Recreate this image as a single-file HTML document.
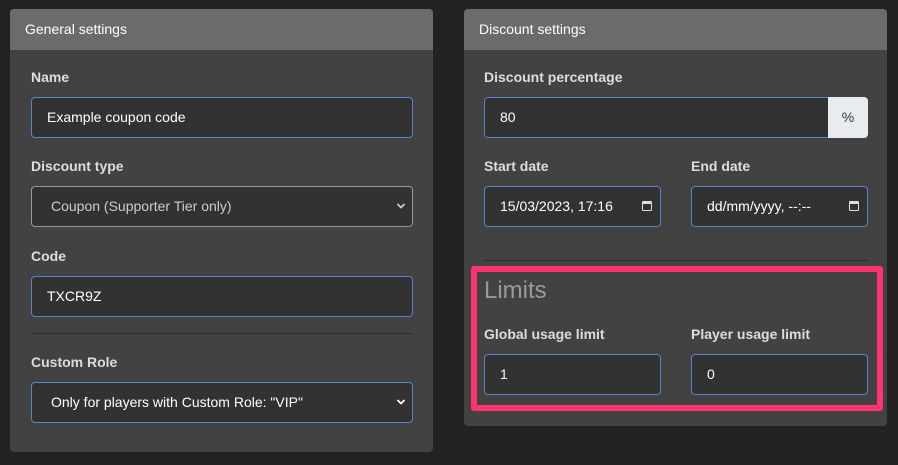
<!DOCTYPE html>
<html><head><style>
*{box-sizing:border-box;margin:0;padding:0}
body{width:898px;height:465px;background:#222;font-family:"Liberation Sans",sans-serif;position:relative;overflow:hidden;color:#fff}
.card{position:absolute;background:#424242;border-radius:4px;overflow:hidden}
.hd{height:41px;background:#6b6b6b;color:#fff;font-size:14px;line-height:41px;padding-left:15px}
.lbl{position:absolute;font-size:14px;font-weight:bold;color:#ddd}
.in{position:absolute;height:41px;background:#323232;border:1px solid #5c83c9;border-radius:4px;font-size:14px;line-height:39px;padding-left:15px;color:#fff}
.hr{position:absolute;height:1px;background:#2e2e2e}
.chev{position:absolute;right:6px;top:15px}
.cal{position:absolute;right:8px;top:14px;width:10px;height:10px;border:1.5px solid #ddd;border-top-width:3px;border-radius:1px}
</style></head><body>
<div class="card" style="left:10px;top:9px;width:423px;height:443px"><div class="hd">General settings</div></div>
<div class="card" style="left:464px;top:9px;width:423px;height:417px"><div class="hd">Discount settings</div></div>

<div class="lbl" style="left:31px;top:69px">Name</div>
<div class="in" style="left:31px;top:97px;width:382px">Example coupon code</div>
<div class="lbl" style="left:31px;top:158px">Discount type</div>
<div class="in" style="left:31px;top:186px;width:382px;border-color:#999;padding-left:19px;color:#ccc">Coupon (Supporter Tier only)<svg class="chev" width="10" height="8" viewBox="0 0 10 8"><path d="M1.5 2 L5 5.5 L8.5 2" stroke="#ccc" stroke-width="1.8" fill="none"/></svg></div>
<div class="lbl" style="left:31px;top:248px">Code</div>
<div class="in" style="left:31px;top:276px;width:382px">TXCR9Z</div>
<div class="hr" style="left:31px;top:333px;width:382px"></div>
<div class="lbl" style="left:31px;top:354px">Custom Role</div>
<div class="in" style="left:31px;top:382px;width:382px;padding-left:19px">Only for players with Custom Role: "VIP"<svg class="chev" width="10" height="8" viewBox="0 0 10 8"><path d="M1.5 2 L5 5.5 L8.5 2" stroke="#fff" stroke-width="1.8" fill="none"/></svg></div>

<div class="lbl" style="left:484px;top:69px">Discount percentage</div>
<div class="in" style="left:484px;top:97px;width:345px;border-radius:4px 0 0 4px">80</div>
<div style="position:absolute;left:828px;top:97px;width:40px;height:41px;background:#e9ecef;border-radius:0 4px 4px 0;color:#333;font-size:14px;text-align:center;line-height:41px">%</div>
<div class="lbl" style="left:484px;top:158px">Start date</div>
<div class="in" style="left:484px;top:186px;width:177px">15/03/2023, 17:16<span class="cal"></span></div>
<div class="lbl" style="left:691px;top:158px">End date</div>
<div class="in" style="left:691px;top:186px;width:177px">dd/mm/yyyy, --:--<span class="cal"></span></div>
<div class="hr" style="left:484px;top:260px;width:384px"></div>

<div style="position:absolute;left:471px;top:266px;width:412px;height:145px;border:6px solid #ff3370;border-radius:3px"></div>
<div style="position:absolute;left:484px;top:277px;font-size:24px;color:#9a9a9a">Limits</div>
<div class="lbl" style="left:484px;top:326px">Global usage limit</div>
<div class="in" style="left:484px;top:354px;width:177px">1</div>
<div class="lbl" style="left:691px;top:326px">Player usage limit</div>
<div class="in" style="left:691px;top:354px;width:177px">0</div>
</body></html>
